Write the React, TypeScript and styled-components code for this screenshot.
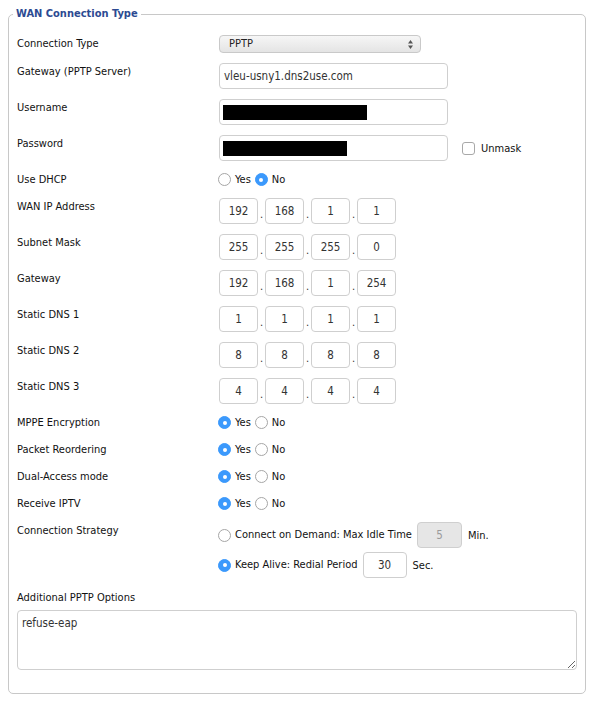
import React from 'react';
import styled, { createGlobalStyle } from 'styled-components';

const GlobalStyle = createGlobalStyle`
  html, body { margin: 0; padding: 0; background: #fff; }
  body {
    font-family: "DejaVu Sans Condensed", "DejaVu Sans", Verdana, sans-serif;
    font-size: 11px;
    color: #111;
  }
`;

const Page = styled.div`
  padding: 7px 8px 10px 8px;
`;

const Fieldset = styled.fieldset`
  margin: 0;
  border: 1px solid #c8c8c8;
  border-radius: 5px;
  padding: 9px 8px 23px 8px;
  min-width: 0;
`;

const Legend = styled.legend`
  margin-left: -4px;
  padding: 0 3px;
  font-weight: bold;
  font-size: 11px;
  color: #2c4a92;
  line-height: 14px;
`;

const Row = styled.div`
  display: flex;
  align-items: flex-start;
  padding: 5px 0;
`;

const Label = styled.div<{ $top?: number }>`
  width: 202px;
  flex: none;
  line-height: 14px;
  padding-top: ${(p) => p.$top ?? 2}px;
`;

const Control = styled.div`
  display: flex;
  align-items: center;
  flex: 1;
  min-height: 17px;
`;

const SelectBox = styled.div`
  width: 202px;
  height: 18px;
  box-sizing: border-box;
  border: 1px solid #c9c9c9;
  border-radius: 4px;
  background: linear-gradient(#f6f6f6, #e4e4e4);
  display: flex;
  align-items: center;
  justify-content: space-between;
  padding: 0 6px 0 9px;
  line-height: 16px;
  color: #222;
`;

const TextBox = styled.div<{ $w: number; $disabled?: boolean; $center?: boolean; $gap?: number }>`
  width: ${(p) => p.$w}px;
  height: 26px;
  box-sizing: border-box;
  margin-left: ${(p) => p.$gap ?? 0}px;
  border: 1px solid #cfcfcf;
  border-radius: 4px;
  background: ${(p) => (p.$disabled ? '#e6e6e6' : '#fff')};
  color: ${(p) => (p.$disabled ? '#9a9a9a' : '#333')};
  display: flex;
  align-items: center;
  justify-content: ${(p) => (p.$center ? 'center' : 'flex-start')};
  padding: 0 4px;
  font-size: 11.5px;
`;

const Redacted = styled.div<{ $w: number }>`
  width: ${(p) => p.$w}px;
  height: 15px;
  background: #000;
  margin-left: -1px;
`;

const Dot = styled.span`
  width: 7px;
  text-align: center;
  align-self: flex-end;
  line-height: 14px;
  padding-bottom: 2px;
  color: #333;
`;

const Check = styled.span`
  width: 11px;
  height: 11px;
  border: 1px solid #a8a8a8;
  border-radius: 3px;
  background: #fff;
  margin: 0 6px 0 14px;
`;

const RadioDot = styled.span<{ $on?: boolean }>`
  width: 13px;
  height: 13px;
  box-sizing: border-box;
  border-radius: 50%;
  flex: none;
  margin-left: -1px;
  border: 1px solid ${(p) => (p.$on ? '#3b99fc' : '#a6a6a6')};
  background: ${(p) => (p.$on ? '#3b99fc' : '#fff')};
  display: flex;
  align-items: center;
  justify-content: center;
  &::after {
    content: '';
    width: 4px;
    height: 4px;
    border-radius: 50%;
    background: ${(p) => (p.$on ? '#fff' : 'transparent')};
  }
`;

const RadioText = styled.span`
  margin: 0 5px 0 4px;
  line-height: 14px;
`;

const Strategy = styled.div`
  display: flex;
  flex-direction: column;
  gap: 4px;
  flex: 1;
`;

const StrategyLine = styled.div`
  display: flex;
  align-items: center;
  height: 26px;
`;

const Unit = styled.span`
  margin-left: 6px;
`;

const Block = styled.div`
  padding-top: 8px;
  line-height: 14px;
`;

const Area = styled.textarea`
  display: block;
  width: 100%;
  height: 60px;
  box-sizing: border-box;
  margin-top: 5px;
  border: 1px solid #cfcfcf;
  border-radius: 4px;
  padding: 5px 4px;
  font-family: inherit;
  font-size: 11.5px;
  color: #333;
  resize: both;
  outline: none;
`;

const Arrows = () => (
  <svg width="7" height="11" viewBox="0 0 7 11">
    <path d="M3.5 1 L6 4.5 H1 Z" fill="#555" />
    <path d="M3.5 10 L6 6.5 H1 Z" fill="#555" />
  </svg>
);

const YesNo = ({ yes }: { yes: boolean }) => (
  <Control>
    <RadioDot $on={yes} />
    <RadioText>Yes</RadioText>
    <RadioDot $on={!yes} />
    <RadioText>No</RadioText>
  </Control>
);

const IpField = ({ parts }: { parts: string[] }) => (
  <Control>
    {parts.map((p, i) => (
      <React.Fragment key={i}>
        {i > 0 && <Dot>.</Dot>}
        <TextBox $w={39} $center>{p}</TextBox>
      </React.Fragment>
    ))}
  </Control>
);

const ipRows: [string, string[]][] = [
  ['WAN IP Address', ['192', '168', '1', '1']],
  ['Subnet Mask', ['255', '255', '255', '0']],
  ['Gateway', ['192', '168', '1', '254']],
  ['Static DNS 1', ['1', '1', '1', '1']],
  ['Static DNS 2', ['8', '8', '8', '8']],
  ['Static DNS 3', ['4', '4', '4', '4']],
];

const yesRows = ['MPPE Encryption', 'Packet Reordering', 'Dual-Access mode', 'Receive IPTV'];

export default function App() {
  return (
    <Page>
      <GlobalStyle />
      <Fieldset>
        <Legend>WAN Connection Type</Legend>

        <Row>
          <Label $top={2}>Connection Type</Label>
          <Control>
            <SelectBox>
              <span>PPTP</span>
              <Arrows />
            </SelectBox>
          </Control>
        </Row>

        <Row>
          <Label>Gateway (PPTP Server)</Label>
          <TextBox $w={229}>vleu-usny1.dns2use.com</TextBox>
        </Row>

        <Row>
          <Label>Username</Label>
          <TextBox $w={229}>
            <Redacted $w={144} />
          </TextBox>
        </Row>

        <Row>
          <Label>Password</Label>
          <Control>
            <TextBox $w={229}>
              <Redacted $w={124} />
            </TextBox>
            <Check />
            <span>Unmask</span>
          </Control>
        </Row>

        <Row>
          <Label $top={2}>Use DHCP</Label>
          <YesNo yes={false} />
        </Row>

        {ipRows.map(([label, parts]) => (
          <Row key={label}>
            <Label $top={2}>{label}</Label>
            <IpField parts={parts} />
          </Row>
        ))}

        {yesRows.map((label) => (
          <Row key={label}>
            <Label $top={2}>{label}</Label>
            <YesNo yes />
          </Row>
        ))}

        <Row>
          <Label $top={2}>Connection Strategy</Label>
          <Strategy>
            <StrategyLine>
              <RadioDot />
              <RadioText>Connect on Demand: Max Idle Time</RadioText>
              <TextBox $w={45} $disabled $center>5</TextBox>
              <Unit>Min.</Unit>
            </StrategyLine>
            <StrategyLine>
              <RadioDot $on />
              <RadioText>Keep Alive: Redial Period</RadioText>
              <TextBox $w={44} $center>30</TextBox>
              <Unit>Sec.</Unit>
            </StrategyLine>
          </Strategy>
        </Row>

        <Block>
          Additional PPTP Options
          <Area readOnly defaultValue="refuse-eap" />
        </Block>
      </Fieldset>
    </Page>
  );
}
